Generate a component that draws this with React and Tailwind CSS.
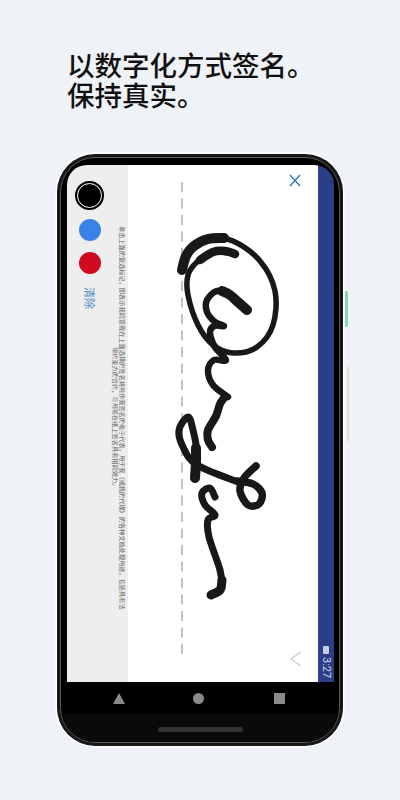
const CJK = { fontFamily: '"Noto Sans CJK SC", "Noto Sans", sans-serif' };

// signature strokes, in page coordinates (viewBox matches the white area)
const STROKES = [
  { w: 5.5, pts: [[182, 270], [190, 248], [210, 238], [233, 241], [260, 261], [275, 291], [273, 325], [257, 347], [233, 353], [213, 345], [198, 325], [188, 295], [188, 275], [197, 262], [213, 252], [235, 254]] },
  { w: 10, pts: [[182, 270], [186, 256], [194, 246], [208, 239], [224, 238]] },
  { w: 8.5, pts: [[200, 260], [213, 252], [225, 251], [235, 254]] },
  { w: 6.5, pts: [[230, 295], [217, 291], [207, 300], [207, 312], [215, 322], [224, 326], [214, 326], [210, 333], [215, 347], [226, 360], [214, 360], [208, 370], [213, 385], [228, 397]] },
  { w: 10, pts: [[247, 310], [238, 302], [230, 295], [222, 291]] },
  { w: 8, pts: [[224, 398], [220, 404], [216, 416], [208, 430], [208, 440], [212, 447]] },
  { w: 7, pts: [[196, 478], [197, 453], [193, 430], [188, 417], [179, 430], [183, 447], [197, 465], [238, 482]] },
  { w: 10, pts: [[195, 478], [196, 462], [196, 448]] },
  { w: 7.5, pts: [[256, 466], [244, 478], [240, 491], [248, 505], [259, 504], [262, 493], [253, 484], [238, 481]] },
  { w: 7, pts: [[215, 497], [210, 488], [202, 493], [205, 505], [215, 515], [208, 520], [209, 537], [220, 570], [222, 587]] },
  { w: 9, pts: [[222, 580], [220, 590], [211, 595]] },
];

// catmull-rom through the points, written out as beziers
function toPath(pts) {
  let d = `M${pts[0][0]} ${pts[0][1]}`;
  for (let i = 0; i < pts.length - 1; i++) {
    const p0 = pts[i - 1] || pts[i];
    const p1 = pts[i];
    const p2 = pts[i + 1];
    const p3 = pts[i + 2] || p2;
    const c1x = p1[0] + (p2[0] - p0[0]) / 6;
    const c1y = p1[1] + (p2[1] - p0[1]) / 6;
    const c2x = p2[0] - (p3[0] - p1[0]) / 6;
    const c2y = p2[1] - (p3[1] - p1[1]) / 6;
    d += ` C${c1x} ${c1y} ${c2x} ${c2y} ${p2[0]} ${p2[1]}`;
  }
  return d;
}

function Signature() {
  return (
    <svg viewBox="128 165 190 517" className="block w-[190px] h-[517px]">
      <line x1="182" y1="182" x2="182" y2="659" stroke="#c2c2c2" strokeWidth="2" strokeDasharray="10 6.5" />
      {STROKES.map((s, i) => (
        <path key={i} d={toPath(s.pts)} fill="none" stroke="#1a1718" strokeWidth={s.w} strokeLinecap="round" strokeLinejoin="round" />
      ))}
      <path d="M290 175 L300 186 M300 175 L290 186" stroke="#3f7fb8" strokeWidth="1.6" fill="none" />
      <path d="M300.5 652 L291 659 L300.5 666" stroke="#cfcfcf" strokeWidth="1.5" fill="none" />
    </svg>
  );
}

function ToolColumn() {
  return (
    <div className="w-[61px] bg-[#eeeeee] flex shrink-0">
      <div className="w-[45px] pt-[16px] flex flex-col items-center shrink-0">
        <div className="w-[29px] h-[29px] rounded-full bg-black flex items-center justify-center">
          <div className="w-[25px] h-[25px] rounded-full bg-black border border-white" />
        </div>
        <div className="w-[22px] h-[22px] rounded-full bg-[#3b82e6] mt-[9px]" />
        <div className="w-[22px] h-[22px] rounded-full bg-[#cf0a1f] mt-[11px]" />
        <div className="mt-[13px] text-[11px] leading-[12px] text-[#4a8cc4] [writing-mode:vertical-rl] [text-orientation:sideways]" style={CJK}>
          清除
        </div>
      </div>
      <div className="flex-1 flex justify-end pt-[60px] pr-[2px] min-w-0">
        <p className="h-[386px] text-[6.2px] leading-[7.5px] text-[#5f5f5f] text-center [writing-mode:vertical-rl] [text-orientation:sideways]" style={CJK}>
          单击上面的复选标记，即表示我同意我在上面选择的签名将用作我签名的电子代表，用于我（或我的代理）的各种文档处理用途，包括具有法律约束力的合约，与用笔在纸上签名具有相同效力。
        </p>
      </div>
    </div>
  );
}

function StatusStrip() {
  return (
    <div className="w-[16px] bg-[#2a3f87] flex flex-col items-center justify-end pb-[4px] shrink-0">
      <div className="w-[6px] h-[8px] bg-[#c3cbe6] rounded-[1px] mb-[3px]" />
      <span className="text-[11px] leading-[12px] text-[#d3daf0] [writing-mode:vertical-rl] [text-orientation:sideways]" style={{ fontFamily: 'Roboto, sans-serif' }}>
        3:27
      </span>
    </div>
  );
}

function NavBar() {
  return (
    <div className="h-[32px] bg-black shrink-0">
      <div className="flex items-center h-full">
        <svg viewBox="0 0 12 11" className="w-[12px] h-[11px] ml-[46px]">
          <path d="M6 0 L12 11 L0 11 Z" fill="#8a8a8a" />
        </svg>
        <div className="w-[11px] h-[11px] rounded-full bg-[#8a8a8a] ml-[68px]" />
        <div className="w-[11px] h-[11px] bg-[#8a8a8a] ml-[70px]" />
      </div>
    </div>
  );
}

export default function App() {
  return (
    <div className="w-[400px] h-[800px] bg-[#eff2f7] overflow-hidden" style={CJK}>
      <h1 className="pt-[49px] pl-[67px] text-[27.5px] leading-[30px] font-medium text-[#111111] h-[154px]">
        以数字化方式签名。
        <br />
        保持真实。
      </h1>

      <div className="relative ml-[57px] w-[286px] h-[592px]">
        <div className="absolute left-[288px] top-[137px] w-[3px] h-[36px] rounded-r-[2px] bg-[#86d6b2]" />
        <div className="absolute left-[290px] top-[213px] w-[2px] h-[74px] bg-[#dcdcdc]" />

        <div className="h-full rounded-[38px] bg-[#161616] p-[3px] shadow-[0_0_0_1.5px_#ffffff]">
          <div className="h-full rounded-[35px] border border-[#5a5a5a] bg-black overflow-hidden pt-[7px] pl-[6px] pr-[5px] flex flex-col">
            <div className="h-[517px] flex rounded-t-[20px] overflow-hidden shrink-0">
              <ToolColumn />
              <div className="bg-white w-[190px] shrink-0">
                <Signature />
              </div>
              <StatusStrip />
            </div>
            <NavBar />
            <div className="flex-1 flex justify-center items-center bg-[#0a0a0a] -mx-[6px] pt-[3px]">
              <div className="w-[85px] h-[5px] rounded-full bg-[#333333]" />
            </div>
          </div>
        </div>
      </div>
    </div>
  );
}
